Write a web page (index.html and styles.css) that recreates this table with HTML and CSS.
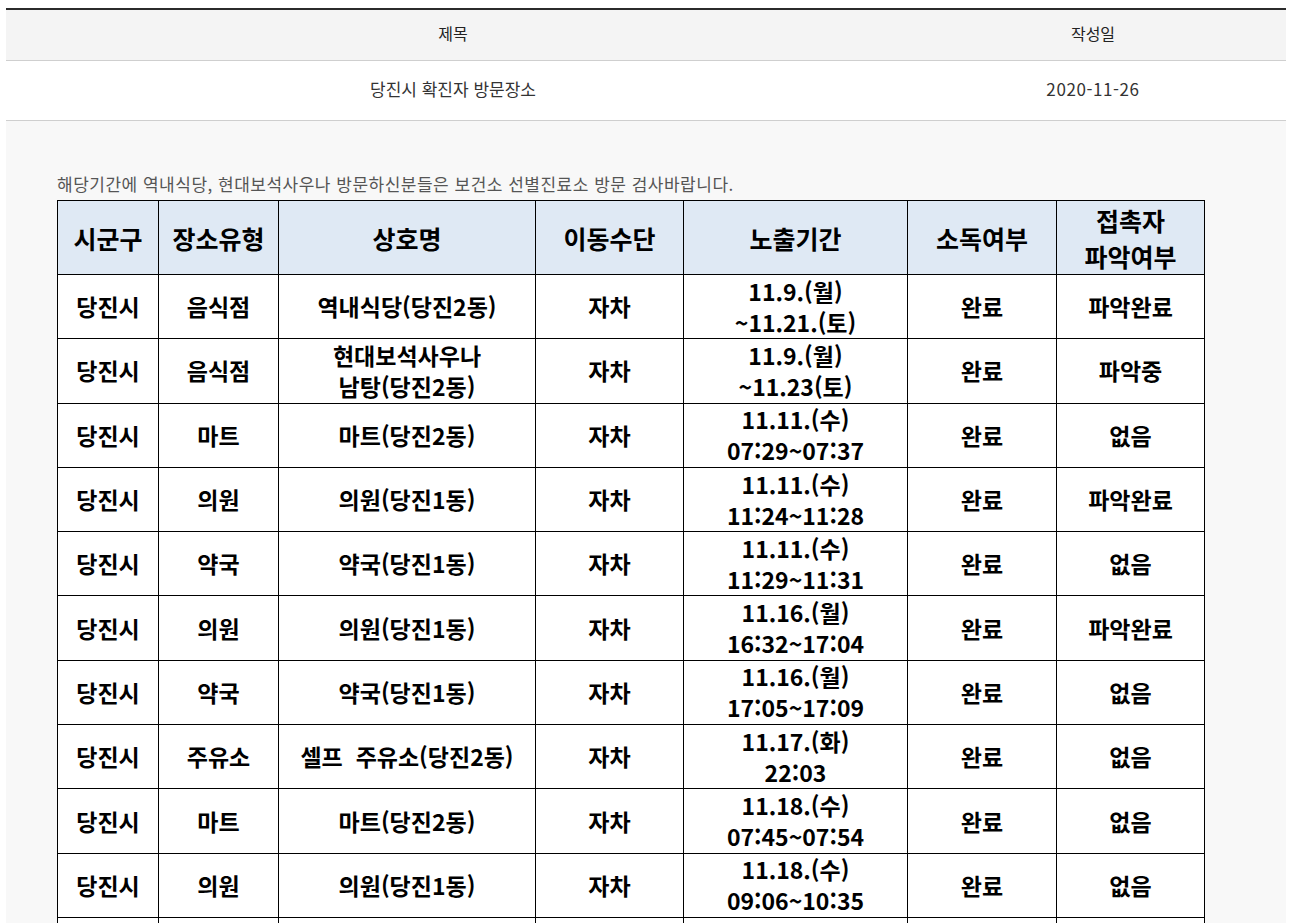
FILE: index.html
```html
<!DOCTYPE html>
<html lang="ko">
<head>
<meta charset="utf-8">
<title>당진시 확진자 방문장소</title>
<link rel="stylesheet" href="styles.css">
</head>
<body>
<div class="board">
  <div class="board-row board-head">
    <div class="col-title">제목</div>
    <div class="col-date">작성일</div>
  </div>
  <div class="board-row board-item">
    <div class="col-title">당진시 확진자 방문장소</div>
    <div class="col-date">2020-11-26</div>
  </div>
  <div class="content">
    <p class="notice">해당기간에 역내식당, 현대보석사우나 방문하신분들은 보건소 선별진료소 방문 검사바랍니다.</p>
    <table class="places">
      <colgroup>
        <col class="c1"><col class="c2"><col class="c3"><col class="c4"><col class="c5"><col class="c6"><col class="c7">
      </colgroup>
      <thead>
        <tr>
          <th>시군구</th><th>장소유형</th><th>상호명</th><th>이동수단</th><th>노출기간</th><th>소독여부</th><th>접촉자<br>파악여부</th>
        </tr>
      </thead>
      <tbody>
        <tr><td>당진시</td><td>음식점</td><td>역내식당(당진2동)</td><td>자차</td><td>11.9.(월)<br>~11.21.(토)</td><td>완료</td><td>파악완료</td></tr>
        <tr><td>당진시</td><td>음식점</td><td>현대보석사우나<br>남탕(당진2동)</td><td>자차</td><td>11.9.(월)<br>~11.23(토)</td><td>완료</td><td>파악중</td></tr>
        <tr><td>당진시</td><td>마트</td><td>마트(당진2동)</td><td>자차</td><td>11.11.(수)<br>07:29~07:37</td><td>완료</td><td>없음</td></tr>
        <tr><td>당진시</td><td>의원</td><td>의원(당진1동)</td><td>자차</td><td>11.11.(수)<br>11:24~11:28</td><td>완료</td><td>파악완료</td></tr>
        <tr><td>당진시</td><td>약국</td><td>약국(당진1동)</td><td>자차</td><td>11.11.(수)<br>11:29~11:31</td><td>완료</td><td>없음</td></tr>
        <tr><td>당진시</td><td>의원</td><td>의원(당진1동)</td><td>자차</td><td>11.16.(월)<br>16:32~17:04</td><td>완료</td><td>파악완료</td></tr>
        <tr><td>당진시</td><td>약국</td><td>약국(당진1동)</td><td>자차</td><td>11.16.(월)<br>17:05~17:09</td><td>완료</td><td>없음</td></tr>
        <tr><td>당진시</td><td>주유소</td><td>셀프&nbsp; 주유소(당진2동)</td><td>자차</td><td>11.17.(화)<br>22:03</td><td>완료</td><td>없음</td></tr>
        <tr><td>당진시</td><td>마트</td><td>마트(당진2동)</td><td>자차</td><td>11.18.(수)<br>07:45~07:54</td><td>완료</td><td>없음</td></tr>
        <tr><td>당진시</td><td>의원</td><td>의원(당진1동)</td><td>자차</td><td>11.18.(수)<br>09:06~10:35</td><td>완료</td><td>없음</td></tr>
        <tr><td>당진시</td><td>약국</td><td>약국(당진1동)</td><td>자차</td><td>11.18.(수)<br>10:36~10:40</td><td>완료</td><td>없음</td></tr>
      </tbody>
    </table>
  </div>
</div>
</body>
</html>
```

FILE: styles.css
```css
html, body {
  margin: 0;
  padding: 0;
  background: #fff;
}
body {
  font-family: "Noto Sans CJK KR", "Noto Sans", sans-serif;
  color: #222;
}
.board {
  width: 1280px;
  margin: 8px 0 0 6px;
  border-top: 2px solid #2b2b2b;
}
.board-row {
  display: flex;
  align-items: center;
  box-sizing: border-box;
  border-bottom: 1px solid #cfcfcf;
  padding-bottom: 4px;
}
.board-head {
  height: 51px;
  background: #f4f4f4;
  font-size: 16px;
  color: #222;
}
.board-item {
  height: 60px;
  background: #fff;
  font-size: 17px;
  color: #333;
}
.col-title {
  width: 894px;
  text-align: center;
}
.col-date {
  width: 386px;
  text-align: center;
}
.board-item .col-date {
  letter-spacing: 0.6px;
}
.content {
  background: #f8f8f8;
  padding: 52px 0 40px 51px;
  min-height: 900px;
}
.notice {
  margin: 0 0 5px 0;
  font-size: 17px;
  line-height: 22px;
  color: #555;
  letter-spacing: 0.5px;
}
.places {
  border-collapse: collapse;
  background: #fff;
  table-layout: fixed;
  width: 1147px;
}
.c1 { width: 101px; }
.c2 { width: 120px; }
.c3 { width: 257px; }
.c4 { width: 148px; }
.c5 { width: 224px; }
.c6 { width: 149px; }
.c7 { width: 148px; }
.places th,
.places td {
  border: 1px solid #000;
  text-align: center;
  vertical-align: middle;
  color: #000;
  font-weight: 700;
  padding: 0;
}
.places th {
  background: #dfe9f4;
  font-size: 25px;
  line-height: 36px;
  height: 73px;
}
.places td {
  font-size: 23px;
  line-height: 31px;
  height: 63.3px;
}
```
